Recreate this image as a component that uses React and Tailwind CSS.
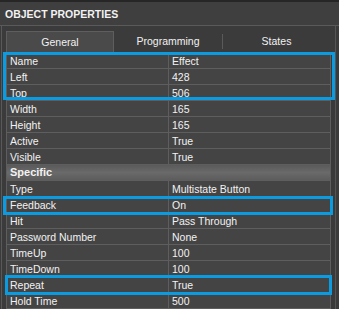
import React from "react";

const rowsA = [
  ["Name", "Effect"],
  ["Left", "428"],
  ["Top", "506"],
  ["Width", "165"],
  ["Height", "165"],
  ["Active", "True"],
  ["Visible", "True"],
];
const rowsB = [
  ["Type", "Multistate Button"],
  ["Feedback", "On"],
  ["Hit", "Pass Through"],
  ["Password Number", "None"],
  ["TimeUp", "100"],
  ["TimeDown", "100"],
  ["Repeat", "True"],
  ["Hold Time", "500"],
];

function Row({ name, value }) {
  return (
    <div className="flex h-[16px] border-b border-[#5e5e5e] bg-[#444444] text-[10.5px] leading-[14px] shrink-0">
      <div className="w-[162px] pl-[3px] pt-px border-r border-[#5e5e5e] whitespace-nowrap">{name}</div>
      <div className="flex-1 pl-[3px] pt-px whitespace-nowrap">{value}</div>
    </div>
  );
}

export default function App() {
  return (
    <div className="relative w-[339px] h-[309px] overflow-hidden bg-[#3b3b3b] text-[#f2f2f2] font-['Liberation_Sans',Arial,sans-serif]">
      <div className="h-[26px] border-t-2 border-[#262626] border-b border-b-[#5a5a5a] bg-[#3f3f3f] pl-[5px] text-[10.5px] font-bold leading-[22px] pt-[1px]">
        OBJECT PROPERTIES
      </div>
      <div className="flex flex-col h-[283px] border-l border-[#595959] ml-[1px] pl-[4px] pr-[3px]">
        <div className="flex h-[26px] pt-[5px] border-r border-[#555] pr-[5px] shrink-0">
          <div className="w-[108px] h-[21px] bg-[#4a4a4a] border border-[#5e5e5e] border-b-0 text-center text-[10.5px] leading-[18px] pt-[1px]">
            General
          </div>
          <div className="w-[109px] flex items-center justify-center text-[10.5px] border-r border-[#5a5a5a] my-[3px]">
            Programming
          </div>
          <div className="flex-1 flex items-center justify-center text-[10.5px] my-[3px]">
            States
          </div>
        </div>
        <div className="flex flex-1 min-h-0">
          <div className="flex flex-col w-[326px] border-l border-t border-r border-[#5e5e5e] overflow-hidden">
            {rowsA.map(([n, v]) => (
              <Row key={n} name={n} value={v} />
            ))}
            <div className="h-[16px] shrink-0 border-b border-[#5e5e5e] bg-gradient-to-b from-[#5a5a5a] via-[#6a6a6a] to-[#5c5c5c] pl-[3px] text-[11px] font-bold leading-[15px]">
              Specific
            </div>
            {rowsB.map(([n, v]) => (
              <Row key={n} name={n} value={v} />
            ))}
          </div>
          <div className="w-[5px] bg-[#3a3a3a] border-r border-[#555]" />
        </div>
      </div>

      <div className="absolute left-[3px] top-[52px] w-[332px] h-[48px] border-[3px] border-[#0a9be0]" />
      <div className="absolute left-[3px] top-[196px] w-[330px] h-[19px] border-[3px] border-[#0a9be0]" />
      <div className="absolute left-[5px] top-[275px] w-[327px] h-[20px] border-[3px] border-[#0a9be0]" />
    </div>
  );
}
